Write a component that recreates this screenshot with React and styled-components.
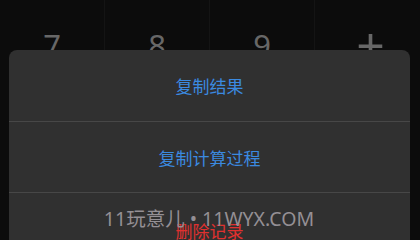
import React from "react";
import styled, { createGlobalStyle } from "styled-components";

const Global = createGlobalStyle`
  html, body {
    margin: 0;
    padding: 0;
    background: #0c0c0c;
    overflow: hidden;
  }
  body {
    font-family: "Noto Sans CJK SC", "Noto Sans", sans-serif;
  }
`;

const Screen = styled.div`
  position: relative;
  width: 420px;
  height: 240px;
  overflow: hidden;
  background: #0c0c0c;
`;

const Keypad = styled.div`
  display: grid;
  grid-template-columns: repeat(4, 1fr);
  grid-auto-rows: 90px;
`;

const Key = styled.div`
  display: flex;
  align-items: center;
  justify-content: center;
  border-right: 1px solid #141414;
  color: #676767;
  font-family: "Noto Sans", Roboto, sans-serif;
  font-weight: 400;
  font-size: ${(p) => (p.$op ? "50px" : "31px")};
  line-height: 1;
  padding-bottom: ${(p) => (p.$op ? "2px" : "0")};
  padding-left: ${(p) => (p.$op ? "6px" : "0")};

  &:last-child {
    border-right: none;
  }
`;

const Sheet = styled.div`
  position: absolute;
  left: 9px;
  right: 10px;
  top: 50px;
  background: #303030;
  border-radius: 8px;
  display: flex;
  flex-direction: column;
`;

const Item = styled.div`
  height: 71px;
  display: flex;
  align-items: center;
  justify-content: center;
  font-size: 17px;
  color: ${(p) => (p.$danger ? "#e0302f" : "#3b8ae0")};
  border-top: ${(p) => (p.$first ? "none" : "1.5px solid #474747")};
  padding-top: ${(p) => (p.$danger ? "4px" : "0")};
  box-sizing: border-box;
`;

const Watermark = styled.div`
  position: absolute;
  left: 0;
  right: 0;
  top: 203px;
  text-align: center;
  font-family: "Noto Sans", "Noto Sans CJK SC", sans-serif;
  font-size: 19.5px;
  color: #948f94;
  padding-right: 2px;
`;

const keys = [
  { label: "7" },
  { label: "8" },
  { label: "9" },
  { label: "+", op: true },
];

export default function App() {
  return (
    <Screen>
      <Global />
      <Keypad>
        {keys.map((k) => (
          <Key key={k.label} $op={k.op}>
            {k.label}
          </Key>
        ))}
      </Keypad>
      <Sheet>
        <Item $first>复制结果</Item>
        <Item>复制计算过程</Item>
        <Item $danger>删除记录</Item>
      </Sheet>
      <Watermark>11玩意儿 • 11WYX.COM</Watermark>
    </Screen>
  );
}
